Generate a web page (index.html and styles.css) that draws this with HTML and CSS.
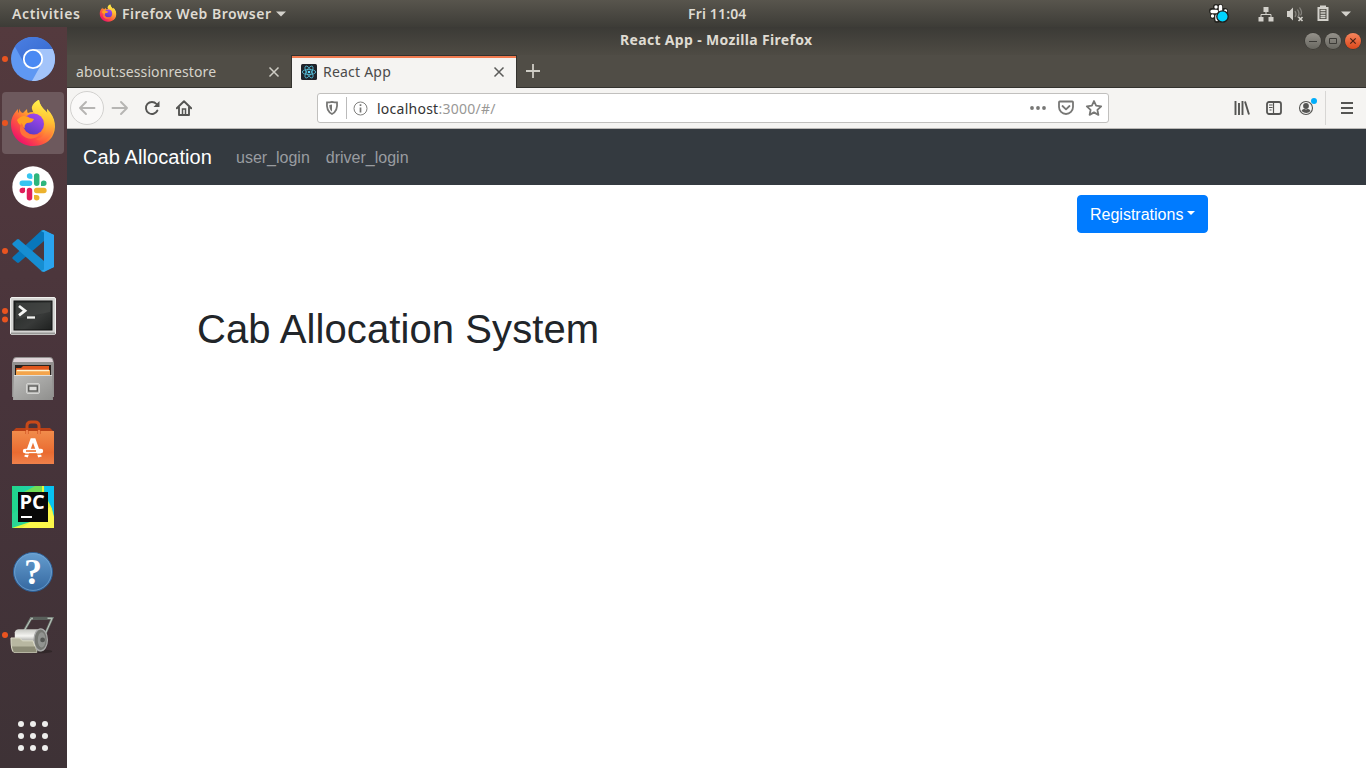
FILE: index.html
```html
<!DOCTYPE html>
<html lang="en">
<head>
<meta charset="utf-8">
<title>React App</title>
<link rel="stylesheet" href="styles.css">
</head>
<body>
<div class="desktop">
  <header class="topbar">
    <span class="activities">Activities</span>
    <svg class="ff-small" width="18" height="18" viewBox="0 0 48 48"><use href="#firefox"/></svg>
    <span class="appname">Firefox Web Browser</span>
    <svg class="caret" width="10" height="6" viewBox="0 0 10 6"><path d="M0 .5h10L5 5.500z" fill="#d3d1cb"/></svg>
    <span class="clock">Fri 11:04</span>
    <div class="tray">
      <svg width="22" height="22" viewBox="0 0 22 22">
        <g stroke="#24231f" stroke-width="6" stroke-linecap="round"><path d="M8 5v0M12 5v5M4 9h6M5 14v0M9 14v4M12 9h5M17 9v0"/></g>
        <g stroke="#fff" stroke-width="3.400" stroke-linecap="round"><path d="M8 5v0M12.500 4.500v4.500M4 9.500h4.500M4.500 14v0M9 14v3.500M13 9.500h0M17.500 9v0"/></g>
        <circle cx="14.500" cy="14.500" r="5.700" fill="#00d5ff" stroke="#1d1c1a" stroke-width="1.300"/>
      </svg>
      <svg class="net" width="16" height="16" viewBox="0 0 16 16"><path fill="#d3d1cb" d="M5.500 1h5v5h-5zM.5 11h5v4.500h-5zM10.500 11h5v4.500h-5z"/><path d="M8 6v3M3 11V8.500h10V11" fill="none" stroke="#d3d1cb" /></svg>
      <svg class="vol" width="18" height="16" viewBox="0 0 18 16"><path d="M1 5h2.500L7 1.500v13L3.500 11H1z" fill="#d3d1cb"/><path d="M9 5q2 3 0 6M11.500 3.500q3 4.500 0 8M13.500 1.500q3.500 5 1 8" fill="none" stroke="#85837d" stroke-width="1.300"/><path d="M12.500 11l4 4m0-4l-4 4" stroke="#d3d1cb" stroke-width="1.700"/></svg>
      <svg class="bat" width="12" height="16" viewBox="0 0 12 16"><path d="M3 1.500h6M1.500 3h9v12h-9z" fill="none" stroke="#d3d1cb" stroke-width="2"/><path d="M3.500 5.500h5M3.500 8h5M3.500 10.500h5M3.500 12.500h5" stroke="#d3d1cb" stroke-width="1.300"/></svg>
      <svg width="10" height="6" viewBox="0 0 10 6"><path d="M0 .5h10L5 5.500z" fill="#d3d1cb"/></svg>
    </div>
  </header>

  <aside class="dock">
    <div class="slot one">
      <svg width="46" height="46" viewBox="0 0 46 46">
        <defs><linearGradient id="cr" x2="1" y2="1"><stop stop-color="#4b7fe2"/><stop offset="1" stop-color="#3568ce"/></linearGradient></defs>
        <circle cx="23" cy="23" r="22" fill="#5f98f3"/>
        <path d="M23 13h19.600a22 22 0 0 1-20.600 32L32 27z" fill="#a3c4fa"/>
        <path d="M4.800 10.500A22 22 0 0 1 42.600 13H23a10 10 0 0 0-9 14z" fill="url(#cr)"/>
        <circle cx="23" cy="23" r="9.200" fill="#4a89f3" stroke="#fff" stroke-width="1.800"/>
      </svg>
    </div>
    <div class="slot one current">
      <svg width="48" height="48" viewBox="0 0 48 48">
        <defs>
          <linearGradient id="fa" x1=".85" y1=".1" x2=".2" y2=".9"><stop stop-color="#fff148"/><stop offset=".35" stop-color="#ffb42b"/><stop offset=".65" stop-color="#ff623a"/><stop offset="1" stop-color="#f01468"/></linearGradient>
          <linearGradient id="fb" x1=".8" y1="0" x2=".3" y2="1"><stop stop-color="#a846f0"/><stop offset="1" stop-color="#593bc5"/></linearGradient>
          <linearGradient id="fc" x1=".5" y1="0" x2=".4" y2="1"><stop stop-color="#fff44c"/><stop offset=".5" stop-color="#ffc233"/><stop offset="1" stop-color="#ff5e3e"/></linearGradient>
          <g id="firefox">
            <path d="M10 9.500C11 12 12 13.500 14 14l4-4q0 3 1 4 2-1 5-1C22 7 27 2 30 1c1 7 6 10 9 14-1-2-1-4-1-5 9 8 10 20 5 28C39 44 32 47 24 47 11 47 2 37 2 25c0-6 3-11 7-15 0 2 0 3 1 4z" fill="url(#fa)"/>
            <path d="M30 1c1 7 7 10 9 14-1-2-1-3-1-5 9 9 9 21 4 27-4 5-11 6-15 3 8-1 12-8 10-15-2-8-12-8-14-15-1-3 3-8 7-9z" fill="url(#fc)"/>
            <circle cx="24.500" cy="25" r="10.500" fill="url(#fb)"/>
            <path d="M8 21c4-5 9-5 13-2l4 1c-1 3-4 4-7 4-2 1-3 3-2 5-4-2-7-4-8-8z" fill="#ffa023"/>
            <path d="M14 26c1 8 9 12 17 9-4 6-13 6-18 1-3-4-2-8-1-12z" fill="#ff7139"/>
          </g>
        </defs>
        <use href="#firefox"/>
      </svg>
    </div>
    <div class="slot">
      <svg width="44" height="44" viewBox="0 0 44 44"><circle cx="22" cy="22" r="20.700" fill="#fff"/>
        <g fill="none" stroke-width="5.500" stroke-linecap="round">
          <path d="M11.300 18.200h7.200M18.600 10.900v.1" stroke="#36c5f0"/><path d="M25.700 11v7.200M32.700 18.300h.1" stroke="#2eb67d"/><path d="M25.700 25.500h7.200M25.700 32.700v.1" stroke="#ecb22e"/><path d="M18.500 25.500v7.200M11.300 25.500h.1" stroke="#e01e5a"/>
        </g>
        <path fill="#36c5f0" d="M18.600 10.900h2.700v2.900h-2.700z"/><path fill="#2eb67d" d="M30 18.300h2.700V21H30z"/><path fill="#ecb22e" d="M23 30h2.700v2.700H23z"/><path fill="#e01e5a" d="M11.300 22.800H14v2.700h-2.700z"/>
      </svg>
    </div>
    <div class="slot one">
      <svg width="44" height="44" viewBox="0 0 44 44">
        <path d="M33 12L8 33.500q-1 .8-2 0L1.800 30q-1-1 0-2L31 1l2 .500z" fill="#0877bb"/>
        <path d="M33 32L8 10.500q-1-.8-2 0L1.800 14q-1 1 0 2L31 42.500l2-.5z" fill="#168ed2"/>
        <path d="M33 1l10 5v32l-10 5-3-1 3-1.500V3.500L30 2z" fill="#29a8ed"/><path d="M33 2l10 4v32l-10 4z" fill="#2aa4ef"/>
      </svg>
    </div>
    <div class="slot two">
      <svg class="down" width="48" height="42" viewBox="0 0 48 42">
        <defs><linearGradient id="tm" x2="1" y2="1"><stop stop-color="#252927"/><stop offset=".6" stop-color="#383a39"/><stop offset="1" stop-color="#1e201f"/></linearGradient></defs>
        <rect x="1.500" y="2.500" width="45" height="37" rx="1.500" fill="#d5d5d3" stroke="#f1f1ef"/><path d="M2 38.500h44" stroke="#989896" stroke-width="2"/>
        <rect x="5" y="6" width="38" height="29" fill="url(#tm)" stroke="#111"/><path d="M7 8h34v9L7 24z" fill="#4c4e4c" opacity=".5"/>
        <path d="M10 11l6 4.700-6 4.700" fill="none" stroke="#f4f4f2" stroke-width="2.800"/><path d="M18 22.500h8" stroke="#f4f4f2" stroke-width="2.300"/>
      </svg>
    </div>
    <div class="slot">
      <svg class="files" width="46" height="48" viewBox="0 0 46 48">
        <defs><linearGradient id="dr" x2="1" y2="1"><stop stop-color="#bcbcba"/><stop offset="1" stop-color="#8f8f8d"/></linearGradient></defs>
        <path d="M3 3q1-2 3-2h34q2 0 3 2l1 4v34H2V7z" fill="#92908f"/><path d="M4 3q1-1 3-1h32q2 0 3 1l1 3H3z" fill="#dfd4d8"/>
        <path d="M5 9h36v11H5z" fill="#28211e"/><path d="M6 12h5l2-2h26v9H6z" fill="#df551c"/><path d="M6 14h34v5H6z" fill="#f4a44b"/><path d="M7 14.500h32" stroke="#fff2cf" stroke-width="1.500"/>
        <path d="M4 19h38l1 25H3z" fill="url(#dr)"/><path d="M4 19.500h38" stroke="#dededc"/>
        <rect x="16.500" y="27.500" width="13" height="10" rx="1.500" fill="#b7b7b5" stroke="#d4d4d2"/><rect x="18.700" y="30" width="8.600" height="5" fill="#dededc" stroke="#5d5d5b" stroke-width="1.400"/>
      </svg>
    </div>
    <div class="slot">
      <svg width="44" height="46" viewBox="0 0 44 46">
        <defs><linearGradient id="bg" x2="0" y2="1"><stop stop-color="#f18c4b"/><stop offset=".65" stop-color="#ea6b31"/><stop offset="1" stop-color="#ef814b"/></linearGradient></defs>
        <path d="M1 12l4-4h34l4 4z" fill="#b94017"/><path d="M1 11h42v33H1z" fill="url(#bg)"/>
        <path d="M16 14V6q0-4 4-4h4q4 0 4 4v8" fill="none" stroke="#c74919" stroke-width="3"/><path d="M16 10v5M28 10v5" stroke="#ee824a" stroke-width="2"/>
        <path d="M15 37l6-17h2l6 17" fill="none" stroke="#fff" stroke-width="3.700"/><path d="M14 31h16" stroke="#fff" stroke-width="4.400" stroke-linecap="round"/><path d="M15 31h10" stroke="#ed712f" stroke-width="1.600"/><path d="M12 34.200h20" stroke="#ed712f" stroke-width="1.200"/>
      </svg>
    </div>
    <div class="slot">
      <svg width="42" height="42" viewBox="0 0 42 42">
        <defs><linearGradient id="pc" x2="1"><stop stop-color="#21d789"/><stop offset="1" stop-color="#1ecbd8"/></linearGradient></defs>
        <path d="M0 0h42v42H0z" fill="url(#pc)"/><path d="M20 6L30 0h2v8l8 14 2 10v10H0l6-6h26z" fill="#e6f63d"/><path d="M12 6L23 0h7v6z" fill="#70dd57"/><path d="M32 0h10v28z" fill="#07c3f2"/><path d="M38 21l4 10v11H10z" fill="#fcf84a"/><path d="M0 42V28l6-4v12h12z" fill="#29d694"/>
        <path d="M6 6h30v30H6z" fill="#080808"/><path d="M9 31h11" stroke="#fff" stroke-width="2"/>
        <text x="7.500" y="23" class="pc-text">PC</text>
      </svg>
    </div>
    <div class="slot">
      <svg class="help" width="42" height="42" viewBox="0 0 42 42"><defs><linearGradient id="hp" x2="0" y2="1"><stop stop-color="#659dcf"/><stop offset="1" stop-color="#34679f"/></linearGradient></defs><circle cx="21" cy="21" r="19.500" fill="url(#hp)" stroke="#2d5e95"/><circle cx="21" cy="21" r="18.400" fill="none" stroke="#77a9d5" stroke-width=".7"/><text x="21" y="33" text-anchor="middle" class="help-text">?</text></svg>
    </div>
    <div class="slot one">
      <svg class="roller" width="46" height="44" viewBox="0 0 48 44">
        <defs><linearGradient id="ro" x2="0" y2="1"><stop stop-color="#c7c8c3"/><stop offset=".3" stop-color="#f5f5f2"/><stop offset=".6" stop-color="#92938e"/><stop offset="1" stop-color="#62635e"/></linearGradient></defs>
        <ellipse cx="30" cy="37" rx="14" ry="2" fill="#272020" opacity=".6"/>
        <path d="M15 15L22 2.500h22L34 25" fill="none" stroke="#748078" stroke-width="2.500"/><path d="M15 15l7-12h7M39 2.500h5L34 25" fill="none" stroke="#c1cbc2" stroke-width="1"/><path d="M24 2.500h15" stroke="#59605b" stroke-width="3.300"/>
        <path d="M5 17q1-3 4-3h24v23H11q-5-1-6-9z" fill="url(#ro)"/><ellipse cx="32" cy="25" rx="7" ry="11.500" fill="#767873" stroke="#aaa" stroke-width="1.300"/><ellipse cx="33" cy="25" rx="4" ry="8" fill="#929491"/><circle cx="34" cy="25" r="2.500" fill="#565855"/>
        <path d="M1 23h9l3 3h11q2 6 4 12H4q-3-1-3-15z" fill="#b8b7a1" stroke="#e0dfcc" stroke-width="1"/><path d="M2 32h24l2 6H4z" fill="#8c8b76"/>
      </svg>
    </div>
    <svg class="apps" width="32" height="32" viewBox="0 0 32 32"><g fill="#eeeeec"><circle cx="4" cy="4" r="3"/><circle cx="16" cy="4" r="3"/><circle cx="28" cy="4" r="3"/><circle cx="4" cy="16" r="3"/><circle cx="16" cy="16" r="3"/><circle cx="28" cy="16" r="3"/><circle cx="4" cy="28" r="3"/><circle cx="16" cy="28" r="3"/><circle cx="28" cy="28" r="3"/></g></svg>
  </aside>

  <main class="window">
    <div class="titlebar">
      <span class="wintitle">React App - Mozilla Firefox</span>
      <div class="controls">
        <span class="control"><svg width="16" height="16" viewBox="0 0 16 16"><path d="M4 8.500h8" stroke="#3c3b37"/></svg></span>
        <span class="control"><svg width="16" height="16" viewBox="0 0 16 16"><path d="M4.500 5.500h7v5h-7z" fill="none" stroke="#3c3b37"/></svg></span>
        <span class="control close"><svg width="16" height="16" viewBox="0 0 16 16"><path d="M5.300 5.300l5.400 5.400m0-5.400l-5.400 5.400" stroke="#4a2115" stroke-width="1.200"/></svg></span>
      </div>
    </div>
    <div class="tabs">
      <div class="tab"><span class="session">about:sessionrestore</span><svg width="12" height="12" viewBox="0 0 12 12"><path d="M1.500 1.500l9 9m0-9l-9 9" stroke="#cfcdc5" stroke-width="1.500"/></svg></div>
      <div class="tab active">
        <svg class="react" width="16" height="16" viewBox="0 0 16 16"><rect width="16" height="16" rx="1.500" fill="#20232a"/><g fill="none" stroke="#53bad5" stroke-width=".85"><ellipse cx="8" cy="8" rx="6.700" ry="2.600"/><ellipse cx="8" cy="8" rx="6.700" ry="2.600" transform="rotate(60 8 8)"/><ellipse cx="8" cy="8" rx="6.700" ry="2.600" transform="rotate(120 8 8)"/></g><circle cx="8" cy="8" r="1.300" fill="#61dafb"/></svg>
        <span class="tabname">React App</span><svg width="12" height="12" viewBox="0 0 12 12"><path d="M1.500 1.500l9 9m0-9l-9 9" stroke="#5c5c5a" stroke-width="1.500"/></svg>
      </div>
      <svg class="plus" width="14" height="14" viewBox="0 0 14 14"><path d="M7 0v14M0 7h14" stroke="#cfcdc5" stroke-width="1.800"/></svg>
    </div>
    <div class="toolbar">
      <span class="back"><svg width="18" height="16" viewBox="0 0 18 16"><path d="M16.500 8H2M8 2L2 8l6 6" class="ln pale"/></svg></span>
      <svg width="18" height="16" viewBox="0 0 18 16"><path d="M1.500 8H16M10 2l6 6-6 6" class="ln pale"/></svg>
      <svg class="reload" width="16" height="16" viewBox="0 0 16 16"><path d="M13.400 10.500A6 6 0 1 1 12.500 4" class="ln"/><path d="M15.500 1v6h-6z" fill="#555553"/></svg>
      <svg class="home" width="16" height="16" viewBox="0 0 16 16"><path d="M.8 8.300L8 1.200l7.200 7.100M3 7v8h10V7" class="ln"/><path d="M6.500 14.500V9h3v5.500" fill="none" stroke="#555553" stroke-width="1.500"/></svg>
      <div class="urlbar">
        <svg class="shield" width="14" height="16" viewBox="0 0 14 16"><path d="M7 1.800q2.500.5 5 .6Q13 11 7 14 1 11 2 2.400q2.500-.1 5-.6z" fill="none" stroke="#777775" stroke-width="1.800"/><path d="M7 4.500v7Q4.200 9.800 4.300 5z" fill="#777775"/></svg>
        <i class="divider"></i>
        <svg class="info" width="15" height="15" viewBox="0 0 15 15"><circle cx="7.500" cy="7.500" r="6.500" fill="none" stroke="#80807e"/><path d="M7.500 3.300v1.800M7.500 6.500v5" stroke="#777775" stroke-width="1.700"/></svg>
        <span class="url"><b>localhost</b>:3000/#/</span>
        <div class="url-actions">
          <svg width="16" height="6" viewBox="0 0 16 6"><g fill="#777775"><circle cx="2" cy="3" r="1.900"/><circle cx="8" cy="3" r="1.900"/><circle cx="14" cy="3" r="1.900"/></g></svg>
          <svg width="16" height="16" viewBox="0 0 16 16"><path d="M1.700 1.500h12.600q.7 0 .7.700V7a7 7 0 0 1-14 0V2.200q0-.7.7-.7zM4.500 6L8 9.300 11.500 6" class="ln gray"/></svg>
          <svg class="star" width="18" height="18" viewBox="0 0 18 18"><path d="M9 2l2.100 4.700 5.100.6-3.800 3.500 1 5.100L9 13.400l-4.400 2.500 1-5.100-3.800-3.500 5.100-.6z" class="ln gray"/></svg>
        </div>
      </div>
      <div class="tools">
        <svg width="16" height="16" viewBox="0 0 16 16"><path d="M1.500 1v14M5 3v12M8.500 1v14M11 1.500l4 13" fill="none" stroke="#555553" stroke-width="1.900"/></svg>
        <svg width="16" height="16" viewBox="0 0 16 16"><rect x="1" y="2" width="14" height="12" rx="2" fill="none" stroke="#555553" stroke-width="1.800"/><path d="M7.500 2v12M3 5h3.500M3 7.500h3.500M3.500 10h2" stroke="#555553" stroke-width="1.200"/></svg>
        <svg class="account" width="20" height="22" viewBox="0 0 20 22"><circle cx="8" cy="12" r="6.500" fill="none" stroke="#555553" stroke-width="1.100"/><circle cx="8" cy="10" r="2.900" fill="#555553"/><path d="M3.500 15q1-2.500 3-2 1.500.8 3 0 2-.5 3 2-4 4-9 0z" fill="#555553"/><circle cx="16" cy="5" r="3" fill="#00adfa"/></svg>
        <i class="toolsep"></i>
        <svg class="menu" width="12" height="14" viewBox="0 0 12 14"><path d="M0 2h12M0 7h12M0 12h12" stroke="#555553" stroke-width="1.900"/></svg>
      </div>
    </div>
    <nav class="navbar"><a class="brand">Cab Allocation</a><a class="navlink">user_login</a><a class="navlink">driver_login</a></nav>
    <section class="page">
      <button class="register">Registrations<i></i></button>
      <h1>Cab Allocation System</h1>
    </section>
  </main>
</div>
</body>
</html>
```
FILE: styles.css
```css
* { box-sizing: border-box; }
body { margin: 0; overflow: hidden; }
svg { display: block; flex: none; }
.desktop {
  width: 1366px;
  height: 768px;
  display: grid;
  grid-template: 27px 741px / 67px 1299px;
  font-family: "Noto Sans", sans-serif;
}
.topbar {
  grid-column: 1 / 3;
  display: flex;
  align-items: center;
  background: linear-gradient(#58554d, #3d3c37);
  color: #dfdbd2;
  font-size: 14px;
  font-weight: 600;
  line-height: 27px;
  white-space: nowrap;
}
.activities { width: 87px; padding-left: 12px; letter-spacing: .6px; }
.ff-small { margin-left: 12px; margin-top: -2px; }
.appname { width: 149px; margin-left: 5px; letter-spacing: .48px; }
.caret { margin-left: 5px; }
.clock { width: 58px; margin-left: 402px; margin-top: -1px; letter-spacing: .15px; }
.tray { display: flex; align-items: center; margin-left: 462px; }
.tray > svg:first-child { margin-top: -2px; }
.net { margin-left: 28px; }
.vol { margin-left: 12px; }
.bat { margin-left: 13px; margin-top: -2px; }
.bat + svg { margin-left: 12px; }

.dock {
  display: flex;
  flex-direction: column;
  align-items: center;
  padding-right: 1px;
  background: linear-gradient(#543a3e, #48343b 50%, #3e3236);
}
.slot {
  position: relative;
  width: 66px;
  height: 64px;
  display: flex;
  align-items: center;
  justify-content: center;
}
.slot > svg { z-index: 1; }
.slot.one::before, .slot.two::before {
  content: "";
  position: absolute;
  left: 2px;
  top: 29px;
  width: 6px;
  height: 6px;
  border-radius: 50%;
  background: #e95420;
  z-index: 1;
}
.slot.two::before { top: 25px; box-shadow: 0 8.500px #e95420; }
.slot.current::after {
  content: "";
  position: absolute;
  inset: 1px 2px;
  border-radius: 4px;
  background: #6d595d;
}
.down { margin-top: 2px; }
.files { margin-top: 2px; }
.help { margin-top: 2px; }
.roller { margin: 3px 0 0 -1px; }
.pc-text { font: 700 20px "Open Sans", sans-serif; fill: #fff; }
.help-text { font: 700 36px "Liberation Serif", serif; fill: #fff; }
.apps { margin-top: 53px; }

.window {
  display: flex;
  flex-direction: column;
  background: #fff;
}
.titlebar {
  height: 28px;
  display: flex;
  align-items: center;
  background: linear-gradient(#3b3a36, #4e4b44);
  color: #dfdbd2;
  font-size: 14px;
  line-height: 26px;
  font-weight: 700;
  white-space: nowrap;
}
.wintitle { width: 192px; margin: -2px 0 0 553px; letter-spacing: .33px; }
.controls { display: flex; gap: 4px; margin-left: 493px; }
.control {
  width: 16px;
  height: 16px;
  border-radius: 50%;
  background: linear-gradient(#95928b, #686760);
  box-shadow: 0 0 0 .5px #34332f;
}
.control.close { background: linear-gradient(#f5855d, #dd481b); }
.tabs {
  height: 33px;
  display: flex;
  background: #504d46;
  border-bottom: 1px solid #33322e;
  color: #d6d3ca;
  font-size: 14px;
  white-space: nowrap;
}
.tab {
  width: 224px;
  display: flex;
  align-items: center;
  padding: 1px 11px 0 9px;
  justify-content: space-between;
}
.session { letter-spacing: .1px; }
.tab.active {
  width: 226px;
  height: 33px;
  padding-top: 0;
  background: #f5f4f2;
  border: 1px solid #33322e;
  border-bottom: 0;
  box-shadow: inset 0 2px #f27b50;
  color: #4b4b4a;
  justify-content: flex-start;
}
.tabname { width: 170px; margin: -1px 0 0 6px; letter-spacing: .22px; }
.plus { margin: 9px 0 0 9px; }
.toolbar {
  height: 41px;
  display: flex;
  align-items: center;
  background: #f5f4f2;
  border-bottom: 1px solid #b9b7b5;
}
.back {
  width: 34px;
  height: 34px;
  margin: 0 7px 0 3px;
  padding: 8px 7px;
  border: 1px solid #d2d1cf;
  border-radius: 50%;
  background: #faf9f8;
}
.ln { fill: none; stroke: #555553; stroke-width: 1.900; stroke-linecap: round; stroke-linejoin: round; }
.ln.pale { stroke: #b6b5b3; }
.ln.gray { stroke: #777775; stroke-width: 1.800; }
.reload { margin-left: 15px; }
.home { margin-left: 16px; }
.urlbar {
  width: 792px;
  height: 30px;
  margin-left: 125px;
  display: flex;
  align-items: center;
  background: #fff;
  border: 1px solid #c1c0be;
  border-radius: 3px;
}
.shield { margin-left: 7px; }
.divider { width: 1px; height: 22px; margin-left: 7px; background: #bbb; }
.info { margin-left: 6px; }
.url { width: 119px; margin-left: 9px; color: #999896; font-size: 14px; letter-spacing: .25px; white-space: nowrap; }
.url b { color: #333; font-weight: 400; }
.url-actions { display: flex; align-items: center; gap: 12px; margin-left: 534px; }
.star { margin-left: -1px; }
.tools { display: flex; align-items: center; margin-left: 125px; gap: 16px; }
.account { margin: -3px 0 0 0; }
.toolsep { width: 1px; height: 34px; margin-left: -9px; background: #d7d6d4; }
.menu { margin-left: -1px; }
.navbar {
  height: 56px;
  display: flex;
  align-items: center;
  padding-left: 16px;
  background: #343a40;
  font-family: "Liberation Sans", Arial, sans-serif;
}
.brand { color: #fff; font-size: 20px; letter-spacing: .08px; margin-right: 24px; }
.navlink { color: #999ca0; font-size: 16px; margin-right: 16px; padding-top: 2px; }
.page {
  flex: 1;
  display: flex;
  flex-direction: column;
  padding: 10px 158px 0 130px;
  font-family: "Liberation Sans", Arial, sans-serif;
}
.register {
  align-self: flex-end;
  display: flex;
  align-items: center;
  width: 131px;
  height: 38px;
  padding: 1px 12px 0;
  border: 1px solid #007bff;
  border-radius: 4px;
  background: #007bff;
  color: #fff;
  font: 16px "Liberation Sans", Arial, sans-serif;
}
.register i { margin: -4px 0 0 4px; border: solid transparent; border-width: 4.800px 4.800px 0; border-top-color: #fff; }
h1 { margin: 72px 0 0; color: #212529; font-size: 40px; font-weight: 400; line-height: 48px; letter-spacing: .1px; }
```
